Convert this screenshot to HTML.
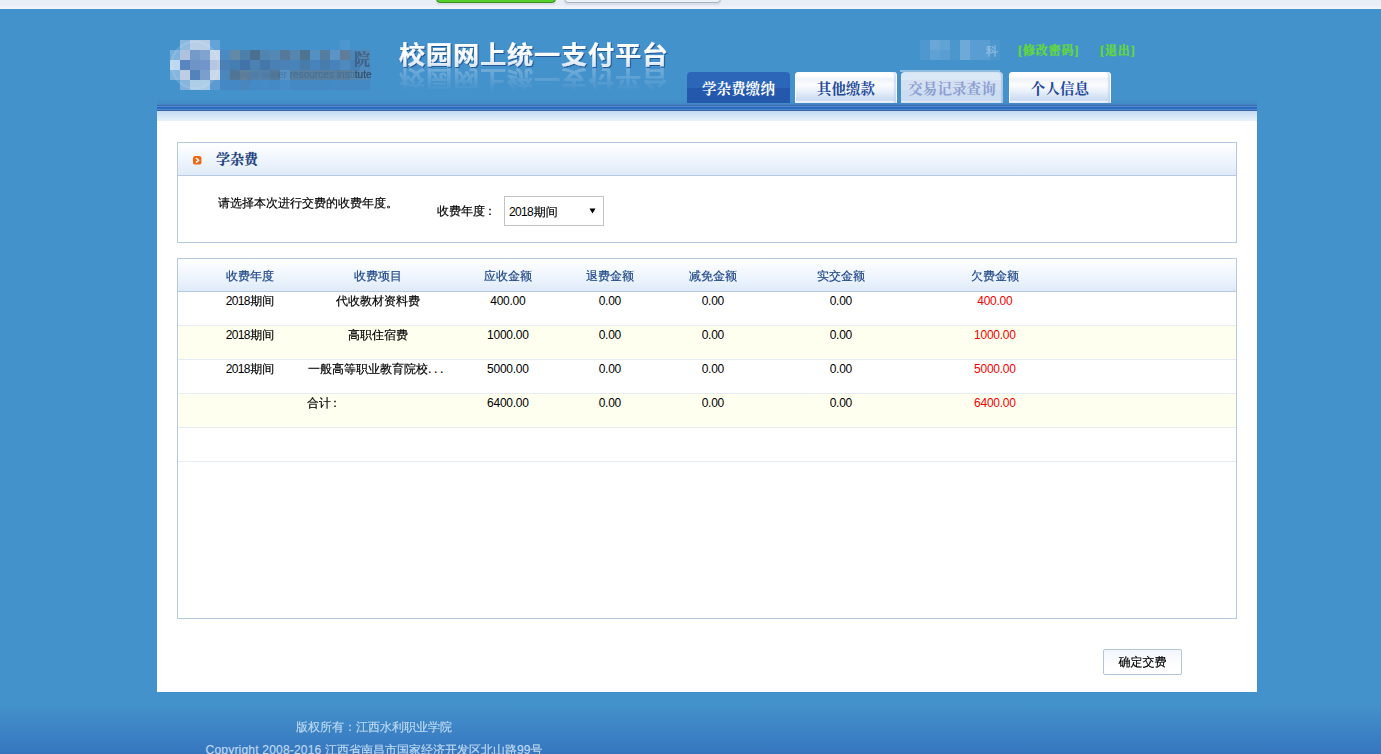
<!DOCTYPE html>
<html lang="zh-CN">
<head>
<meta charset="utf-8">
<title>校园网上统一支付平台</title>
<style>
html,body{margin:0;padding:0;}
body{width:1381px;height:754px;overflow:hidden;position:relative;background:#4492cb;
  font-family:"Liberation Sans","WenQuanYi Zen Hei","Noto Sans CJK SC",sans-serif;font-size:12px;color:#000;-webkit-text-stroke:0.18px currentColor;}
*{box-sizing:border-box;}
.abs{position:absolute;}
/* top browser strip */
#strip{left:0;top:0;width:1381px;height:9px;background:linear-gradient(#e9edf6 0,#e9edf6 5px,#f1f3f9 8px);}
#gbtn{left:436px;top:-10px;width:120px;height:13px;background:#55cd2d;border:1px solid #37901a;border-radius:4px;box-shadow:0 2px 1px #d9dde8;}
#wbtn{left:564px;top:-10px;width:157px;height:13px;background:#eef1f8;border:1px solid #a9b3bc;border-radius:4px;box-shadow:0 2px 1px #d9dde8;}
/* footer gradient */
#foot{left:0;top:692px;width:1381px;height:62px;background:linear-gradient(#4492cb 0px,#4492cb 11px,#3f88c7 30px,#3676bf 62px);}
.ft{color:#bcd9f1;white-space:nowrap;text-align:center;width:400px;left:174px;line-height:14px;}
/* header */
#title{left:399px;top:39px;font-family:"Liberation Sans","Noto Sans CJK SC",sans-serif;font-weight:bold;font-size:25px;letter-spacing:0.7px;line-height:32px;white-space:nowrap;color:#fff;background:linear-gradient(#ffffff 0,#ffffff 45%,#d9e6f4 85%);-webkit-background-clip:text;background-clip:text;-webkit-text-fill-color:transparent;filter:drop-shadow(1px 1px 0.6px rgba(25,65,130,.75));transform:scaleX(1.05);transform-origin:0 0;}
#title2{left:399px;top:63px;font-family:"Liberation Sans","Noto Sans CJK SC",sans-serif;font-weight:bold;font-size:25px;letter-spacing:0.7px;color:#cfe3f7;line-height:32px;white-space:nowrap;transform:scale(1.05,-0.88);transform-origin:0 50%;opacity:.34;-webkit-mask-image:linear-gradient(to top,rgba(0,0,0,1) 10%,rgba(0,0,0,0) 92%);mask-image:linear-gradient(to top,rgba(0,0,0,1) 10%,rgba(0,0,0,0) 92%);}
.lnk{color:#63da38;font-weight:bold;top:44px;line-height:14px;white-space:nowrap;letter-spacing:0.9px;font-family:"Liberation Serif","Noto Serif CJK SC",serif;-webkit-text-stroke:0.35px currentColor;}
.tab{top:72px;height:31px;width:102px;border-radius:4px 4px 0 0;text-align:center;font-family:"Liberation Serif","Noto Serif CJK SC",serif;font-weight:bold;font-size:14.5px;line-height:34px;color:#24499c;white-space:nowrap;overflow:hidden;letter-spacing:0.1px;-webkit-text-stroke:0;
  background:linear-gradient(#ffffff 0,#ffffff 4px,#eef3fa 7px,#fbfcfe 13px,#eaf1fa 19px,#cadbf1 28px,#ffffff 29.5px,#ffffff 31px);box-shadow:inset 1px 0 0 #fff, inset -1px 0 0 #fff, inset -3px 0 1px rgba(190,210,236,.6);}
#t1{left:687px;width:103px;background:linear-gradient(#2c66b8 0,#2c66b8 52%,#2358ac 53%,#2358ac 100%);color:#fff;box-shadow:none;}
#t3{left:901px;width:102px;color:#8c9fd1;background:linear-gradient(#dbe8f5 0,#dbe8f5 8px,#d5e1f2 8px,#d5e1f2 18px,#ccdcf1 18px,#ccdcf1 28px,#edf3fb 29.5px,#f2f6fc 31px);box-shadow:inset -2px 0 1px rgba(160,190,225,.7);}
#t3top{left:900px;top:70px;width:100px;height:2px;background:rgba(219,232,245,.5);}
#bar{left:157px;top:104px;width:1100px;height:7px;background:linear-gradient(#4383c4 0,#4383c4 1px,#3d6db0 1px,#3d6db0 2px,#4b8bd1 2px,#4b8bd1 3px,#2f6bbd 3px,#2f6bbd 5px,#4a88cc 5px,#4a88cc 6px,#3a64a5 6px,#3a64a5 7px);}
#barsh{left:157px;top:99px;width:1100px;height:5px;background:linear-gradient(rgba(50,100,170,0),rgba(50,100,170,.16));}
#main{left:157px;top:111px;width:1100px;height:581px;background:#fff;}
#mgrad{left:157px;top:111px;width:1100px;height:10px;background:linear-gradient(#c3daf2,#e8f1fb);}
/* panels */
.panel{border:1px solid #b7c9df;background:#fff;}
.phead{left:0;top:0;width:100%;border-bottom:1px solid #b7c9df;background:linear-gradient(#ffffff 0,#f3f8fe 40%,#dfebf9 100%);}
.th{top:10px;width:120px;text-align:center;color:#1c4587;line-height:14px;white-space:nowrap;}
.row{left:0;width:1058px;height:34px;border-bottom:1px solid #e6ecf5;}
.row.alt{background:#fffff0;}
.c{top:2px;width:160px;text-align:center;line-height:14px;white-space:nowrap;}
.red{color:#f40000;}
.n{letter-spacing:-0.67px;margin-right:0.67px;-webkit-text-stroke:0;}
.d{letter-spacing:-0.25px;margin-right:0.25px;-webkit-text-stroke:0;}
</style>
</head>
<body>
<div id="strip" class="abs"></div>
<div id="gbtn" class="abs"></div>
<div id="wbtn" class="abs"></div>
<div id="foot" class="abs"></div>
<div class="abs ft" style="top:720px;">版权所有：江西水利职业学院</div>
<div class="abs ft" style="top:743px;"><span style="letter-spacing:0.2px;">Copyright 2008-2016 </span>江西省南昌市国家经济开发区北山路99号</div>

<!-- LOGO -->
<!--LOGO-START--><svg class="abs" style="left:170px;top:40px;" width="200" height="50" viewBox="0 0 200 50" shape-rendering="crispEdges"><rect x="10" y="0" width="10" height="10" fill="#8ab8df"/><rect x="20" y="0" width="10" height="10" fill="#b5cde6"/><rect x="30" y="0" width="10" height="10" fill="#b5cde6"/><rect x="40" y="0" width="10" height="10" fill="#64a3d5"/><rect x="170" y="0" width="10" height="10" fill="#4c97cf"/><rect x="0" y="10" width="10" height="10" fill="#77afdb"/><rect x="10" y="10" width="10" height="10" fill="#a9bfdc"/><rect x="20" y="10" width="10" height="10" fill="#6c94c6"/><rect x="30" y="10" width="10" height="10" fill="#7a9ecc"/><rect x="40" y="10" width="10" height="10" fill="#c5d7ea"/><rect x="50" y="10" width="10" height="10" fill="#4a89c1"/><rect x="60" y="10" width="10" height="10" fill="#6489a6"/><rect x="70" y="10" width="10" height="10" fill="#4c7fa9"/><rect x="80" y="10" width="10" height="10" fill="#4b6f8e"/><rect x="90" y="10" width="10" height="10" fill="#5084b1"/><rect x="100" y="10" width="10" height="10" fill="#5489b5"/><rect x="110" y="10" width="10" height="10" fill="#56789a"/><rect x="120" y="10" width="10" height="10" fill="#5685b0"/><rect x="130" y="10" width="10" height="10" fill="#4f7492"/><rect x="140" y="10" width="10" height="10" fill="#5590c3"/><rect x="150" y="10" width="10" height="10" fill="#557d9f"/><rect x="160" y="10" width="10" height="10" fill="#5b95c8"/><rect x="170" y="10" width="10" height="10" fill="#5f7d98"/><rect x="180" y="10" width="10" height="10" fill="#4c86b8"/><rect x="190" y="10" width="10" height="10" fill="#5587b3"/><rect x="0" y="20" width="10" height="10" fill="#b9d6ee"/><rect x="10" y="20" width="10" height="10" fill="#4f7fbd"/><rect x="20" y="20" width="10" height="10" fill="#668fc4"/><rect x="30" y="20" width="10" height="10" fill="#6a8fc8"/><rect x="40" y="20" width="10" height="10" fill="#b0c3df"/><rect x="50" y="20" width="10" height="10" fill="#4a80b6"/><rect x="60" y="20" width="10" height="10" fill="#457eb0"/><rect x="70" y="20" width="10" height="10" fill="#4173a8"/><rect x="80" y="20" width="10" height="10" fill="#4c82b3"/><rect x="90" y="20" width="10" height="10" fill="#4577ab"/><rect x="100" y="20" width="10" height="10" fill="#4a80b3"/><rect x="110" y="20" width="10" height="10" fill="#4a82b6"/><rect x="120" y="20" width="10" height="10" fill="#4883b9"/><rect x="130" y="20" width="10" height="10" fill="#477ba9"/><rect x="140" y="20" width="10" height="10" fill="#4884bc"/><rect x="150" y="20" width="10" height="10" fill="#477dad"/><rect x="160" y="20" width="10" height="10" fill="#4782bb"/><rect x="170" y="20" width="10" height="10" fill="#4e8abd"/><rect x="180" y="20" width="10" height="10" fill="#4781b6"/><rect x="190" y="20" width="10" height="10" fill="#4e8abf"/><rect x="0" y="30" width="10" height="10" fill="#7db2dc"/><rect x="10" y="30" width="10" height="10" fill="#b9cbe3"/><rect x="20" y="30" width="10" height="10" fill="#4a7cb8"/><rect x="30" y="30" width="10" height="10" fill="#7399c9"/><rect x="40" y="30" width="10" height="10" fill="#c5d7ea"/><rect x="50" y="30" width="10" height="10" fill="#4b87bc"/><rect x="60" y="30" width="10" height="10" fill="#53799a"/><rect x="70" y="30" width="10" height="10" fill="#5f829f"/><rect x="80" y="30" width="10" height="10" fill="#5483ad"/><rect x="90" y="30" width="10" height="10" fill="#5481ab"/><rect x="100" y="30" width="10" height="10" fill="#557b9c"/><rect x="110" y="30" width="10" height="10" fill="#5591c2"/><rect x="120" y="30" width="10" height="10" fill="#557fa3"/><rect x="130" y="30" width="10" height="10" fill="#587f9f"/><rect x="140" y="30" width="10" height="10" fill="#587f9f"/><rect x="150" y="30" width="10" height="10" fill="#587f9f"/><rect x="160" y="30" width="10" height="10" fill="#587f9f"/><rect x="170" y="30" width="10" height="10" fill="#587f9f"/><rect x="180" y="30" width="10" height="10" fill="#5585ae"/><rect x="190" y="30" width="10" height="10" fill="#5388b6"/><rect x="10" y="40" width="10" height="10" fill="#7fb1dc"/><rect x="20" y="40" width="10" height="10" fill="#a9cae6"/><rect x="30" y="40" width="10" height="10" fill="#a9cae6"/><rect x="40" y="40" width="10" height="10" fill="#5b9bd1"/><rect x="50" y="40" width="10" height="10" fill="#4489c6"/><rect x="60" y="40" width="10" height="10" fill="#4489c6"/><rect x="70" y="40" width="10" height="10" fill="#4986be"/><rect x="80" y="40" width="10" height="10" fill="#448ac7"/><rect x="90" y="40" width="10" height="10" fill="#458bc7"/><rect x="100" y="40" width="10" height="10" fill="#448ac6"/><rect x="110" y="40" width="10" height="10" fill="#468dc9"/><rect x="120" y="40" width="10" height="10" fill="#4489c4"/><rect x="130" y="40" width="10" height="10" fill="#4489c4"/><rect x="140" y="40" width="10" height="10" fill="#4489c4"/><rect x="150" y="40" width="10" height="10" fill="#4489c4"/><rect x="160" y="40" width="10" height="10" fill="#448ac6"/><rect x="170" y="40" width="10" height="10" fill="#4489c4"/><rect x="180" y="40" width="10" height="10" fill="#4489c4"/><rect x="190" y="40" width="10" height="10" fill="#4489c4"/></svg><!--LOGO-END-->
<svg class="abs" style="left:168px;top:38px;" width="54" height="54" viewBox="0 0 54 54"><circle cx="27" cy="27" r="23.5" fill="rgba(255,255,255,.06)" stroke="rgba(255,255,255,.13)" stroke-width="2"/></svg>
<div class="abs" style="left:228px;top:68px;width:146px;font-size:10.1px;line-height:13px;color:#2d4a66;white-space:nowrap;"><span style="opacity:.22;filter:blur(.8px);">Jiangxi wat</span><span style="opacity:.3;filter:blur(.7px);">er resources insti</span><span style="opacity:.95;">tute</span></div>
<div class="abs" style="left:354px;top:50px;font-family:'Liberation Serif','Noto Serif CJK SC',serif;font-weight:bold;font-size:16px;line-height:20px;color:#3a5877;opacity:.8;">院</div>

<div id="title" class="abs">校园网上统一支付平台</div>
<div id="title2" class="abs">校园网上统一支付平台</div>

<!-- USER -->
<!--USER-START--><svg class="abs" style="left:920px;top:40px;" width="80" height="20" viewBox="0 0 80 20" shape-rendering="crispEdges"><rect x="0" y="0" width="10" height="10" fill="#4e98cf"/><rect x="10" y="0" width="10" height="10" fill="#6aa7d6"/><rect x="20" y="0" width="10" height="10" fill="#62a3d5"/><rect x="30" y="0" width="10" height="10" fill="#4c96ce"/><rect x="40" y="0" width="10" height="10" fill="#6fa9d8"/><rect x="50" y="0" width="10" height="10" fill="#5a9dd2"/><rect x="60" y="0" width="10" height="10" fill="#5a9dd2"/><rect x="70" y="0" width="10" height="10" fill="#4c96ce"/><rect x="0" y="10" width="10" height="10" fill="#4e98cf"/><rect x="10" y="10" width="10" height="10" fill="#5fa1d4"/><rect x="20" y="10" width="10" height="10" fill="#5a9dd2"/><rect x="30" y="10" width="10" height="10" fill="#4c96ce"/><rect x="40" y="10" width="10" height="10" fill="#6fa9d8"/><rect x="50" y="10" width="10" height="10" fill="#5a9dd2"/><rect x="60" y="10" width="10" height="10" fill="#5a9dd2"/><rect x="70" y="10" width="10" height="10" fill="#4c96ce"/></svg><!--USER-END-->
<div class="abs" style="left:986px;top:44px;font-size:12px;line-height:14px;color:#a9cbe8;opacity:.75;">科</div>
<div class="abs lnk" style="left:1018px;">[修改密码]</div>
<div class="abs lnk" style="left:1100px;">[退出]</div>

<div id="t1" class="abs tab">学杂费缴纳</div>
<div id="t2" class="abs tab" style="left:795px;">其他缴款</div>
<div id="t3top" class="abs"></div>
<div id="t3" class="abs tab">交易记录查询</div>
<div id="t4" class="abs tab" style="left:1009px;">个人信息</div>

<div id="barsh" class="abs"></div>
<div id="bar" class="abs"></div>
<div id="main" class="abs"></div>
<div id="mgrad" class="abs"></div>

<!-- PANEL 1 -->
<div class="abs panel" style="left:177px;top:142px;width:1060px;height:101px;">
  <div class="abs phead" style="height:33px;"></div>
  <svg class="abs" style="left:15px;top:13px;" width="9" height="9" viewBox="0 0 9 9"><rect x="0" y="0" width="8.4" height="8.6" rx="2.2" fill="#f2660f"/><path d="M3 2 L5.6 4.3 L3 6.6" fill="none" stroke="#fff" stroke-width="1.5"/></svg>
  <div class="abs" style="left:38px;top:8px;font-family:'Liberation Serif','Noto Serif CJK SC',serif;font-weight:bold;font-size:14px;line-height:18px;color:#1d3f80;white-space:nowrap;">学杂费</div>
  <div class="abs" style="left:40px;top:53px;line-height:14px;white-space:nowrap;">请选择本次进行交费的收费年度。</div>
  <div class="abs" style="left:259px;top:61px;line-height:14px;white-space:nowrap;">收费年度<span style="margin-left:-1px;">：</span></div>
  <div class="abs" style="left:326px;top:53px;width:100px;height:30px;border:1px solid #c3c3c3;background:#fff;">
    <div class="abs" style="left:4px;top:8px;line-height:14px;white-space:nowrap;"><span class="n">2018</span>期间</div>
    <svg class="abs" style="left:84px;top:11px;" width="8" height="7" viewBox="0 0 8 7"><path d="M0.5 0.4 L6.5 0.4 L3.5 5.6 Z" fill="#000"/></svg>
  </div>
</div>

<!-- PANEL 2 -->
<div class="abs panel" style="left:177px;top:258px;width:1060px;height:361px;">
  <div class="abs phead" style="height:33px;"></div>
  <div class="abs th" style="left:12px;">收费年度</div>
  <div class="abs th" style="left:140px;">收费项目</div>
  <div class="abs th" style="left:270px;">应收金额</div>
  <div class="abs th" style="left:372px;">退费金额</div>
  <div class="abs th" style="left:475px;">减免金额</div>
  <div class="abs th" style="left:603px;">实交金额</div>
  <div class="abs th" style="left:757px;">欠费金额</div>

  <div class="abs row" style="top:33px;">
    <div class="abs c" style="left:-8px;"><span class="n">2018</span>期间</div><div class="abs c" style="left:120px;">代收教材资料费</div><div class="abs c" style="left:250px;"><span class="d">400.00</span></div><div class="abs c" style="left:352px;"><span class="d">0.00</span></div><div class="abs c" style="left:455px;"><span class="d">0.00</span></div><div class="abs c" style="left:583px;"><span class="d">0.00</span></div><div class="abs c red" style="left:737px;"><span class="d">400.00</span></div>
  </div>
  <div class="abs row alt" style="top:67px;">
    <div class="abs c" style="left:-8px;"><span class="n">2018</span>期间</div><div class="abs c" style="left:120px;">高职住宿费</div><div class="abs c" style="left:250px;"><span class="d">1000.00</span></div><div class="abs c" style="left:352px;"><span class="d">0.00</span></div><div class="abs c" style="left:455px;"><span class="d">0.00</span></div><div class="abs c" style="left:583px;"><span class="d">0.00</span></div><div class="abs c red" style="left:737px;"><span class="d">1000.00</span></div>
  </div>
  <div class="abs row" style="top:101px;">
    <div class="abs c" style="left:-8px;"><span class="n">2018</span>期间</div><div class="abs c" style="left:119px;">一般高等职业教育院校<span style="letter-spacing:2.67px;">...</span></div><div class="abs c" style="left:250px;"><span class="d">5000.00</span></div><div class="abs c" style="left:352px;"><span class="d">0.00</span></div><div class="abs c" style="left:455px;"><span class="d">0.00</span></div><div class="abs c" style="left:583px;"><span class="d">0.00</span></div><div class="abs c red" style="left:737px;"><span class="d">5000.00</span></div>
  </div>
  <div class="abs row alt" style="top:135px;">
    <div class="abs c" style="left:129px;text-align:left;">合计<span style="margin-left:-2px;">：</span></div><div class="abs c" style="left:250px;"><span class="d">6400.00</span></div><div class="abs c" style="left:352px;"><span class="d">0.00</span></div><div class="abs c" style="left:455px;"><span class="d">0.00</span></div><div class="abs c" style="left:583px;"><span class="d">0.00</span></div><div class="abs c red" style="left:737px;"><span class="d">6400.00</span></div>
  </div>
  <div class="abs row" style="top:169px;"></div>
</div>

<!-- BUTTON -->
<div class="abs" style="left:1103px;top:649px;width:79px;height:26px;border:1px solid #b3c6de;border-radius:2px;background:linear-gradient(#f1f6fe,#ffffff 70%);text-align:center;line-height:24px;white-space:nowrap;">确定交费</div>
</body>
</html>
